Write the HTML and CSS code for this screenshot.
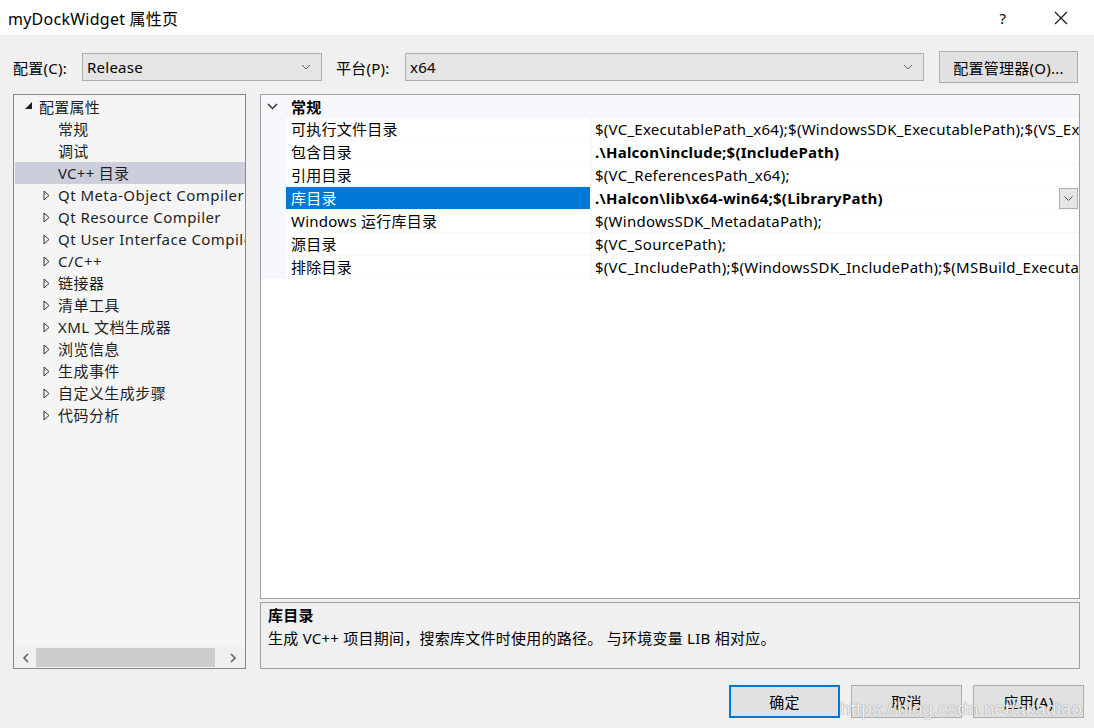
FILE: index.html
```html
<!DOCTYPE html>
<html lang="zh-CN">

<head>
    <meta charset="UTF-8">
    <title>myDockWidget 属性页</title>
    <link rel="stylesheet" href="styles.css">
</head>

<body>

    <div class="titlebar">
        <span class="title">myDockWidget 属性页</span>
        <span class="help">?</span>
        <span class="close">
            <svg width="14" height="14" viewBox="0 0 14 14"><path d="M1 1 L13 13 M13 1 L1 13" stroke="#111" stroke-width="1.1" fill="none"/></svg>
        </span>
    </div>

    <div class="config-row">
        <span class="cfg-label">配置(C):</span>
        <div class="combo combo-config">
            <span>Release</span>
            <svg class="chev" width="10" height="6" viewBox="0 0 10 6"><path d="M1 1 L5 5 L9 1" stroke="#606060" fill="none"/></svg>
        </div>
        <span class="cfg-label cfg-platform">平台(P):</span>
        <div class="combo combo-platform">
            <span>x64</span>
            <svg class="chev" width="10" height="6" viewBox="0 0 10 6"><path d="M1 1 L5 5 L9 1" stroke="#606060" fill="none"/></svg>
        </div>
        <button class="btn btn-manager">配置管理器(O)...</button>
    </div>

    <div class="main">
        <div class="tree">
            <div class="tree-items">
                <div class="node root">
                    <svg class="tri" width="8" height="8" viewBox="0 0 8 8"><polygon points="7,0 7,7 0,7" fill="#1e1e1e"/></svg>
                    配置属性
                </div>
                <div class="node leaf">常规</div>
                <div class="node leaf">调试</div>
                <div class="node leaf selected">VC++ 目录</div>
                <div class="node child"><svg class="tri-o" width="7" height="11" viewBox="0 0 7 11"><polygon points="1,1 6,5.5 1,10" fill="none" stroke="#333"/></svg>Qt Meta-Object Compiler</div>
                <div class="node child"><svg class="tri-o" width="7" height="11" viewBox="0 0 7 11"><polygon points="1,1 6,5.5 1,10" fill="none" stroke="#333"/></svg>Qt Resource Compiler</div>
                <div class="node child"><svg class="tri-o" width="7" height="11" viewBox="0 0 7 11"><polygon points="1,1 6,5.5 1,10" fill="none" stroke="#333"/></svg>Qt User Interface Compiler</div>
                <div class="node child"><svg class="tri-o" width="7" height="11" viewBox="0 0 7 11"><polygon points="1,1 6,5.5 1,10" fill="none" stroke="#333"/></svg>C/C++</div>
                <div class="node child"><svg class="tri-o" width="7" height="11" viewBox="0 0 7 11"><polygon points="1,1 6,5.5 1,10" fill="none" stroke="#333"/></svg>链接器</div>
                <div class="node child"><svg class="tri-o" width="7" height="11" viewBox="0 0 7 11"><polygon points="1,1 6,5.5 1,10" fill="none" stroke="#333"/></svg>清单工具</div>
                <div class="node child"><svg class="tri-o" width="7" height="11" viewBox="0 0 7 11"><polygon points="1,1 6,5.5 1,10" fill="none" stroke="#333"/></svg>XML 文档生成器</div>
                <div class="node child"><svg class="tri-o" width="7" height="11" viewBox="0 0 7 11"><polygon points="1,1 6,5.5 1,10" fill="none" stroke="#333"/></svg>浏览信息</div>
                <div class="node child"><svg class="tri-o" width="7" height="11" viewBox="0 0 7 11"><polygon points="1,1 6,5.5 1,10" fill="none" stroke="#333"/></svg>生成事件</div>
                <div class="node child"><svg class="tri-o" width="7" height="11" viewBox="0 0 7 11"><polygon points="1,1 6,5.5 1,10" fill="none" stroke="#333"/></svg>自定义生成步骤</div>
                <div class="node child"><svg class="tri-o" width="7" height="11" viewBox="0 0 7 11"><polygon points="1,1 6,5.5 1,10" fill="none" stroke="#333"/></svg>代码分析</div>
            </div>
            <div class="hscroll">
                <svg width="8" height="10" viewBox="0 0 8 10"><path d="M6 1 L2 5 L6 9" stroke="#606060" stroke-width="1.6" fill="none"/></svg>
                <div class="thumb-track"><div class="thumb"></div></div>
                <svg width="8" height="10" viewBox="0 0 8 10"><path d="M2 1 L6 5 L2 9" stroke="#606060" stroke-width="1.6" fill="none"/></svg>
            </div>
        </div>

        <div class="right">
            <div class="props">
                <div class="cat">
                    <svg class="cat-chev" width="11" height="7" viewBox="0 0 11 7"><path d="M1 1 L5.5 5.5 L10 1" stroke="#333" stroke-width="1.5" fill="none"/></svg>
                    <b>常规</b>
                </div>
                <div class="prop">
                    <div class="pname">可执行文件目录</div>
                    <div class="pval">$(VC_ExecutablePath_x64);$(WindowsSDK_ExecutablePath);$(VS_ExecutablePath);$(MSBuild_ExecutablePath);$(FxCopDir);$(PATH);</div>
                </div>
                <div class="prop">
                    <div class="pname">包含目录</div>
                    <div class="pval bold">.\Halcon\include;$(IncludePath)</div>
                </div>
                <div class="prop">
                    <div class="pname">引用目录</div>
                    <div class="pval">$(VC_ReferencesPath_x64);</div>
                </div>
                <div class="prop active">
                    <div class="pname">库目录</div>
                    <div class="pval bold">
                        <span>.\Halcon\lib\x64-win64;$(LibraryPath)</span>
                        <span class="drop">
                            <svg width="9" height="5" viewBox="0 0 9 5"><path d="M0.5 0.5 L4.5 4.5 L8.5 0.5" stroke="#555" fill="none"/></svg>
                        </span>
                    </div>
                </div>
                <div class="prop">
                    <div class="pname">Windows 运行库目录</div>
                    <div class="pval">$(WindowsSDK_MetadataPath);</div>
                </div>
                <div class="prop">
                    <div class="pname">源目录</div>
                    <div class="pval">$(VC_SourcePath);</div>
                </div>
                <div class="prop">
                    <div class="pname">排除目录</div>
                    <div class="pval">$(VC_IncludePath);$(WindowsSDK_IncludePath);$(MSBuild_ExecutablePath);$(VC_LibraryPath_x64);</div>
                </div>
            </div>
            <div class="desc">
                <div class="desc-title">库目录</div>
                <div class="desc-text">生成 VC++ 项目期间，搜索库文件时使用的路径。 与环境变量 LIB 相对应。</div>
            </div>
        </div>
    </div>

    <div class="footer">
        <button class="btn btn-dialog btn-default">确定</button>
        <button class="btn btn-dialog">取消</button>
        <button class="btn btn-dialog">应用(A)</button>
        <span class="watermark">https://blog.csdn.net/akadiao</span>
    </div>

</body>

</html>
```

FILE: styles.css
```css
body {
    margin: 0;
    background: #f0f0f0;
    font-family: "Noto Sans", "Noto Sans CJK SC", sans-serif;
    font-size: 15px;
    letter-spacing: 0.25px;
    color: #000;
    position: relative;
    height: 728px;
    overflow: hidden;
}

.titlebar {
    height: 35px;
    background: #fff;
    display: flex;
    align-items: center;
    padding-left: 8px;
}

.title {
    font-size: 16px;
    flex: 1;
}

.help {
    font-size: 15px;
    width: 58px;
    text-align: center;
}

.close {
    width: 58px;
    display: flex;
    justify-content: center;
    padding-right: 4px;
}

.config-row {
    display: flex;
    align-items: center;
    height: 32px;
    padding: 16px 16px 0 13px;
}

.cfg-label {
    width: 69px;
}

.cfg-platform {
    margin-left: 14px;
}

.combo {
    height: 26px;
    background: #e5e5e5;
    border: 1px solid #adadad;
    display: flex;
    align-items: center;
    justify-content: space-between;
    padding: 0 10px 0 4px;
}

.combo-config {
    width: 224px;
}

.combo-platform {
    flex: 1;
}

.btn {
    font-family: inherit;
    font-size: 15px;
    letter-spacing: inherit;
    background: #e1e1e1;
    border: 1px solid #adadad;
    color: #000;
    padding: 0;
}

.btn-manager {
    margin-left: 15px;
    width: 139px;
    height: 32px;
}

.main {
    display: flex;
    gap: 14px;
    margin-top: 11px;
    height: 575px;
    padding: 0 14px 0 13px;
}

.tree {
    width: 231px;
    border: 1px solid #828790;
    background: #f5f5f5;
    display: flex;
    flex-direction: column;
}

.tree-items {
    flex: 1;
    padding-top: 1px;
    overflow: hidden;
}

.node {
    height: 22px;
    line-height: 22px;
    white-space: nowrap;
    overflow: hidden;
    display: flex;
    align-items: center;
    color: #1e1e1e;
}

.node svg {
    flex-shrink: 0;
}

.root {
    padding-left: 11px;
}

.root .tri {
    margin-right: 6px;
    margin-top: -2px;
}

.leaf {
    padding-left: 44px;
}

.child {
    padding-left: 29px;
    letter-spacing: 0.45px;
}

.child .tri-o {
    margin-right: 8px;
}

.selected {
    background: #cccedb;
    margin-left: 1px;
    padding-left: 43px;
}

.hscroll {
    height: 21px;
    display: flex;
    align-items: center;
    background: #f0f0f0;
    padding: 0 8px;
}

.thumb-track {
    flex: 1;
    height: 19px;
    padding: 0 14px 0 6px;
}

.thumb {
    width: 179px;
    height: 19px;
    background: #cdcdcd;
}

.right {
    flex: 1;
    display: flex;
    flex-direction: column;
    gap: 3px;
}

.props {
    height: 503px;
    border: 1px solid #a0a0a0;
    background: #fff;
}

.cat {
    height: 23px;
    background: #f5f7fa;
    display: flex;
    align-items: center;
    padding-left: 6px;
}

.cat-chev {
    margin-right: 13px;
}

.cat b {
    font-weight: bold;
}

.prop {
    display: grid;
    grid-template-columns: 304px 1fr;
    gap: 2px;
    background: #f5f7fa;
    padding-left: 25px;
    padding-bottom: 1px;
}

.pname,
.pval {
    height: 22px;
    line-height: 22px;
    background: #fff;
    white-space: nowrap;
    overflow: hidden;
}

.pname {
    padding-left: 5px;
}

.pval {
    padding-left: 3px;
}

.bold {
    font-weight: bold;
}

.active .pname {
    background: #0078d7;
    color: #fff;
}

.active .pval {
    display: flex;
    justify-content: space-between;
    align-items: center;
}

.drop {
    width: 19px;
    height: 21px;
    background: #e5e5e5;
    border: 1px solid #adadad;
    display: flex;
    align-items: center;
    justify-content: center;
    box-sizing: border-box;
    margin-right: 1px;
}

.desc {
    flex: 1;
    border: 1px solid #a0a0a0;
    padding: 1px 7px;
}

.desc-title {
    font-weight: bold;
    line-height: 22px;
}

.desc-text {
    line-height: 24px;
}

.footer {
    display: flex;
    justify-content: flex-end;
    gap: 11px;
    padding: 16px 10px 0 0;
}

.btn-dialog {
    width: 111px;
    height: 33px;
}

.btn-default {
    border: 2px solid #0078d7;
}

.watermark {
    position: absolute;
    right: 12px;
    bottom: 8px;
    font-family: "Liberation Sans", sans-serif;
    font-size: 19px;
    letter-spacing: 0;
    color: rgba(255, 255, 255, 0.85);
    text-shadow: 0 0 1px #999, 0 0 1px #999;
}
```
